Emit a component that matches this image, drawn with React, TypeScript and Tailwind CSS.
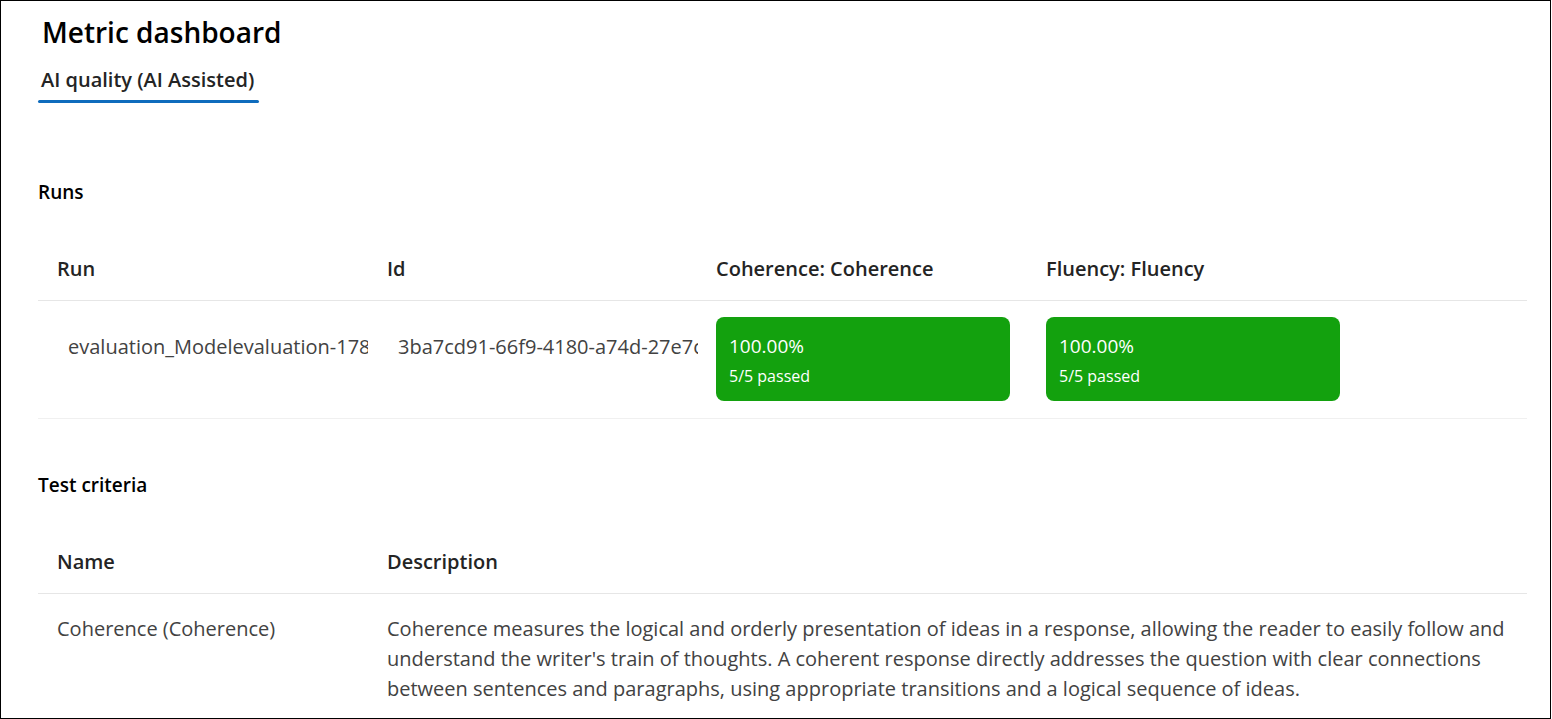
const RUNS = [
  {
    run: "evaluation_Modelevaluation-1784",
    id: "3ba7cd91-66f9-4180-a74d-27e7c",
    scores: [
      { pct: "100.00%", passed: "5/5 passed" },
      { pct: "100.00%", passed: "5/5 passed" },
    ],
  },
];

const CRITERIA = [
  {
    name: "Coherence (Coherence)",
    description:
      "Coherence measures the logical and orderly presentation of ideas in a response, allowing the reader to easily follow and understand the writer's train of thoughts. A coherent response directly addresses the question with clear connections between sentences and paragraphs, using appropriate transitions and a logical sequence of ideas.",
  },
];

function ScoreCard({ pct, passed }: { pct: string; passed: string }) {
  return (
    <div className="w-[294px] h-[84px] rounded-lg bg-[#13a10e] text-white px-[13px] pt-[16px]">
      <div className="text-[19px] leading-[26px]">{pct}</div>
      <div className="text-[16px] leading-[22px] mt-[6px]">{passed}</div>
    </div>
  );
}

export default function App() {
  return (
    <div className="w-[1551px] h-[719px] border border-black bg-white overflow-hidden text-[#242424] font-['Open_Sans',sans-serif]">
      <div className="pl-[37px] pr-[23px]">
        {/* Header */}
        <h1 className="ml-[4px] pt-[13px] text-[28px] leading-[36px] font-semibold text-black">
          Metric dashboard
        </h1>
        <div className="mt-[16px] inline-flex flex-col">
          <span className="pl-[3px] pr-[5px] text-[20px] leading-[28px] font-semibold text-[#242424]">
            AI quality (AI Assisted)
          </span>
          <span className="mt-[6px] h-[3px] rounded-full bg-[#0f6cbd]" />
        </div>

        {/* Runs */}
        <h2 className="mt-[76px] text-[19px] leading-[26px] font-semibold text-black">Runs</h2>
        <div className="mt-[32px]">
          <div className="grid grid-cols-[330px_330px_330px_1fr] h-[64px] items-center border-b border-[#e6e6e6] text-[20px] font-semibold">
            <div className="pl-[19px]">Run</div>
            <div className="pl-[19px]">Id</div>
            <div className="pl-[18px]">Coherence: Coherence</div>
            <div className="pl-[18px]">Fluency: Fluency</div>
          </div>
          {RUNS.map((r) => (
            <div
              key={r.id}
              className="grid grid-cols-[330px_330px_330px_1fr] h-[118px] border-b border-[#f0f0f0] text-[20px] text-[#424242]"
            >
              <div className="pl-[30px] pt-[32px] leading-[28px] whitespace-nowrap overflow-hidden">{r.run}</div>
              <div className="pl-[30px] pt-[32px] leading-[28px] whitespace-nowrap overflow-hidden">{r.id}</div>
              {r.scores.map((s, i) => (
                <div key={i} className="pl-[18px] pt-[16px]">
                  <ScoreCard pct={s.pct} passed={s.passed} />
                </div>
              ))}
            </div>
          ))}
        </div>

        {/* Test criteria */}
        <h2 className="mt-[53px] text-[19px] leading-[26px] font-semibold text-black">Test criteria</h2>
        <div className="mt-[32px]">
          <div className="grid grid-cols-[330px_1fr] h-[64px] items-center border-b border-[#e6e6e6] text-[20px] font-semibold">
            <div className="pl-[19px]">Name</div>
            <div className="pl-[19px]">Description</div>
          </div>
          {CRITERIA.map((c) => (
            <div key={c.name} className="grid grid-cols-[330px_1fr] pt-[20px] text-[20px] leading-[30px] text-[#424242]">
              <div className="pl-[19px]">{c.name}</div>
              <div className="pl-[19px] pr-[16px]">{c.description}</div>
            </div>
          ))}
        </div>
      </div>
    </div>
  );
}
